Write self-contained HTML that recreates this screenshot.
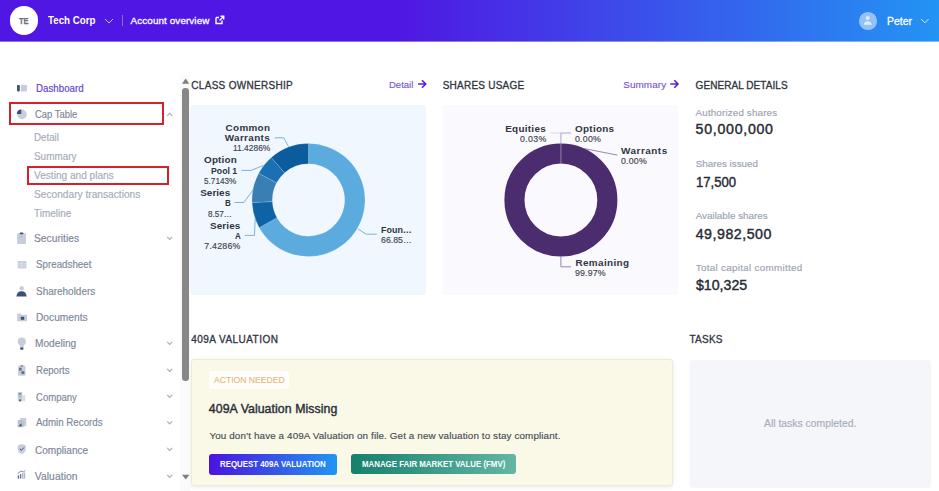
<!DOCTYPE html>
<html><head><meta charset="utf-8">
<style>
html,body{margin:0;padding:0;}
body{width:939px;height:491px;overflow:hidden;position:relative;background:#ffffff;font-family:"Liberation Sans",sans-serif;}
.t{position:absolute;white-space:nowrap;transform-origin:0 0;font-family:"Liberation Sans",sans-serif;}
.b{position:absolute;}
</style></head><body>
<div class="b" style="left:0;top:0;width:939px;height:41px;background:linear-gradient(90deg,#5016e3 0%,#5016e3 42%,#2394f3 100%);"></div>
<div class="b" style="left:0;top:41px;width:939px;height:1px;opacity:0.6;background:linear-gradient(90deg,#4a0ee0 0%,#4a0ee0 42%,#2394f3 100%);"></div>
<div class="b" style="left:9.5px;top:6.4px;width:28.4px;height:28.4px;border-radius:50%;background:#fff;"></div>
<div class="b" style="left:122px;top:15px;width:1px;height:11px;background:rgba(255,255,255,0.35);"></div>
<div class="b" style="left:859px;top:12px;width:17.5px;height:17.5px;border-radius:50%;background:rgba(255,255,255,0.5);"></div>

<!-- panels -->
<div class="b" style="left:190.2px;top:104.5px;width:236px;height:190.7px;background:#f0f7fe;border-radius:2px;"></div>
<div class="b" style="left:442.8px;top:104.5px;width:235.4px;height:190.7px;background:#faf9fe;border-radius:2px;"></div>
<div class="b" style="left:191px;top:359px;width:479.5px;height:125px;background:#faf9e7;border:1px solid #eeebd8;border-radius:3px;box-shadow:0 1px 4px rgba(0,0,0,0.09);"></div>
<div class="b" style="left:209px;top:371.3px;width:80px;height:18px;background:#fffefa;border-radius:3px;"></div>
<div class="b" style="left:209px;top:453.6px;width:127.7px;height:21.3px;background:linear-gradient(90deg,#4a13e0,#2196f3);border-radius:3px;"></div>
<div class="b" style="left:350.6px;top:453.7px;width:165px;height:20.6px;background:linear-gradient(90deg,#16806d,#63b6a6);border-radius:3px;"></div>
<div class="b" style="left:690px;top:359.5px;width:241px;height:127px;background:#f5f6fa;border-radius:3px;box-shadow:0 1px 2px rgba(0,0,0,0.04);"></div>

<!-- scrollbar -->
<div class="b" style="left:180px;top:75px;width:10px;height:416px;background:#fafafa;"></div>
<div class="b" style="left:182.3px;top:88.3px;width:6.6px;height:292.5px;background:#878787;border-radius:3.3px;"></div>

<!-- red boxes -->
<div class="b" style="left:8.6px;top:102.2px;width:151.4px;height:19.3px;border:2px solid #d2232c;"></div>
<div class="b" style="left:27px;top:165.7px;width:138.2px;height:15.8px;border:2px solid #d2232c;"></div>

<svg class="b" style="left:0;top:0" width="939" height="491" viewBox="0 0 939 491">
 <!-- header icons -->
 <polyline points="105,19 109,23 113,19" fill="none" stroke="rgba(255,255,255,0.7)" stroke-width="1"/>
 <path d="M216 17.5v6h6v-3 M216 17.5h3" fill="none" stroke="#fff" stroke-width="1.4"/>
 <path d="M219.5 20.5L223.5 16.5M220.5 16.3h3.2v3.2" fill="none" stroke="#fff" stroke-width="1.4"/>
 <circle cx="867.7" cy="18" r="2" fill="rgba(255,255,255,0.7)"/>
 <path d="M863.6 24.8c0.4-2.6 2-3.6 4.1-3.6s3.7 1 4.1 3.6z" fill="rgba(255,255,255,0.7)"/>
 <polyline points="921,19 924.8,22.8 928.6,19" fill="none" stroke="rgba(255,255,255,0.8)" stroke-width="1"/>
 <!-- scroll arrows -->
 <polygon points="182,83.8 189.3,83.8 185.65,78.5" fill="#7e7e7e"/>
 <polygon points="182,474.7 189.5,474.7 185.75,479.5" fill="#7e7e7e"/>
 <!-- sidebar icons -->
 <rect x="17" y="85" width="2.8" height="6.4" rx="0.8" fill="#3b4f7c"/>
 <rect x="20.8" y="85" width="6.2" height="6.4" rx="0.6" fill="#c7cedb"/>
 <circle cx="22" cy="114.4" r="4.8" fill="#c7cedb"/>
 <path d="M21.3 109.4A4.6 4.6 0 0 0 16.8 113.9L21.3 113.9Z" fill="#3b4f7c"/>
 <rect x="17.1" y="233.2" width="8.9" height="10.7" rx="1" fill="#c7cedb"/>
 <rect x="19.8" y="232.5" width="3.5" height="1.8" rx="0.6" fill="#3b4f7c"/>
 <rect x="19" y="236.5" width="3" height="0.8" fill="#aab2c2"/>
 <rect x="17.6" y="261" width="8.8" height="7.4" rx="0.8" fill="#c7cedb"/>
 <path d="M17.6 263.8h8.8M17.6 266h8.8M21.5 261v7.4" stroke="#e6e9ef" stroke-width="0.6"/>
 <circle cx="21.7" cy="288.3" r="2.2" fill="#c7cedb"/>
 <path d="M16.4 296.4c0.3-3.5 2.3-5.2 5.15-5.2s4.85 1.7 5.15 5.2z" fill="#3b4f7c"/>
 <path d="M17.2 313.5h3.5l1 1.2h5.3v6.6h-9.8z" fill="#c7cedb"/>
 <rect x="20.8" y="316.8" width="3.4" height="3" rx="0.5" fill="#3b4f7c"/>
 <circle cx="21.8" cy="341.6" r="4.1" fill="#c7cedb"/>
 <rect x="19.9" y="345" width="3.8" height="3.4" fill="#c7cedb"/>
 <rect x="20.2" y="347.6" width="3.2" height="2.2" rx="0.8" fill="#3b4f7c"/>
 <rect x="18.1" y="365.8" width="7.4" height="10" rx="0.8" fill="#c7cedb"/>
 <rect x="20.3" y="365.2" width="3" height="1.3" rx="0.4" fill="#6f7a96"/>
 <rect x="19" y="367.8" width="2.6" height="2.8" fill="#66718f"/>
 <circle cx="22.9" cy="372.6" r="1.7" fill="#66718f"/>
 <rect x="17.8" y="392" width="4.4" height="9.3" fill="#c7cedb"/>
 <rect x="22.2" y="395.2" width="3" height="6.1" fill="#d9dde6"/>
 <rect x="18.6" y="393.2" width="2.8" height="1.6" fill="#7d88a3"/>
 <rect x="18.6" y="396" width="2.8" height="1" fill="#a3acbd"/>
 <rect x="19.2" y="399.4" width="1.8" height="1.9" fill="#4a5a82"/>
 <rect x="20" y="418" width="6.3" height="8.3" rx="0.8" fill="#c7cedb"/>
 <rect x="17.7" y="420" width="6" height="7.2" rx="0.8" fill="#b9c1cf"/>
 <path d="M18.5 426.3l3-3v3z" fill="#3b4f7c"/>
 <path d="M21.75 444l4.05 1.5v3.5c0 2.6-1.8 4.2-4.05 5c-2.25-0.8-4.05-2.4-4.05-5v-3.5z" fill="#c7cedb"/>
 <polyline points="19.8,448.8 21.3,450.3 23.9,447.5" fill="none" stroke="#3b4f7c" stroke-width="1"/>
 <rect x="17.7" y="475.5" width="1.4" height="3.1" fill="#5d6b8c"/>
 <rect x="19.9" y="474" width="1.4" height="4.6" fill="#6f7c99"/>
 <rect x="22.1" y="473" width="1.4" height="5.6" fill="#a9b1c1"/>
 <rect x="24.1" y="472.5" width="1.1" height="6.1" fill="#a9b1c1"/>
 <path d="M17.7 473.5l3.5-2.5 2 1 2-1.5" fill="none" stroke="#5d6b8c" stroke-width="0.8"/>
 <!-- chevrons -->
 <polyline points="167.2,115.8 169.7,113.3 172.2,115.8" fill="none" stroke="#a9afbb" stroke-width="1.2"/>
 <polyline points="167.2,236.8 169.7,239.3 172.2,236.8" fill="none" stroke="#a9afbb" stroke-width="1.2"/>
 <polyline points="167.2,341.8 169.7,344.3 172.2,341.8" fill="none" stroke="#a9afbb" stroke-width="1.2"/>
 <polyline points="167.2,368.8 169.7,371.3 172.2,368.8" fill="none" stroke="#a9afbb" stroke-width="1.2"/>
 <polyline points="167.2,394.8 169.7,397.3 172.2,394.8" fill="none" stroke="#a9afbb" stroke-width="1.2"/>
 <polyline points="167.2,421.3 169.7,423.8 172.2,421.3" fill="none" stroke="#a9afbb" stroke-width="1.2"/>
 <polyline points="167.2,447.8 169.7,450.3 172.2,447.8" fill="none" stroke="#a9afbb" stroke-width="1.2"/>
 <polyline points="167.2,474.8 169.7,477.3 172.2,474.8" fill="none" stroke="#a9afbb" stroke-width="1.2"/>
 <!-- arrows for Detail / Summary -->
 <path d="M418 84h7.5M422 80.3l3.7 3.7-3.7 3.7" fill="none" stroke="#5a1fe0" stroke-width="1.6"/>
 <path d="M670.3 84h7.5M674.3 80.3l3.7 3.7-3.7 3.7" fill="none" stroke="#5a1fe0" stroke-width="1.6"/>
 <!-- donut 1 -->
 <path d="M308.50 143.50A56.5 56.5 0 1 1 259.24 227.66L276.94 217.72A36.2 36.2 0 1 0 308.50 163.80Z" fill="#5babdf" stroke="rgba(240,247,254,0.5)" stroke-width="0.3"/><path d="M259.24 227.66A56.5 56.5 0 0 1 252.06 202.54L272.34 201.62A36.2 36.2 0 0 0 276.94 217.72Z" fill="#0e63a4" stroke="rgba(240,247,254,0.5)" stroke-width="0.3"/><path d="M252.06 202.54A56.5 56.5 0 0 1 258.75 173.23L276.62 182.85A36.2 36.2 0 0 0 272.34 201.62Z" fill="#3a7fb3" stroke="rgba(240,247,254,0.5)" stroke-width="0.3"/><path d="M258.75 173.23A56.5 56.5 0 0 1 271.33 157.45L284.68 172.74A36.2 36.2 0 0 0 276.62 182.85Z" fill="#1a70b2" stroke="rgba(240,247,254,0.5)" stroke-width="0.3"/><path d="M271.33 157.45A56.5 56.5 0 0 1 308.50 143.50L308.50 163.80A36.2 36.2 0 0 0 284.68 172.74Z" fill="#0b5c9c" stroke="rgba(240,247,254,0.5)" stroke-width="0.3"/>
 <polyline points="274.8,137.8 283.8,137.8 288.6,146.8" fill="none" stroke="#5ca2cf" stroke-width="0.8"/>
 <polyline points="241.4,170.4 251.2,170.4 263.4,165.5" fill="none" stroke="#5ca2cf" stroke-width="0.8"/>
 <polyline points="234.6,202.5 243.9,202.5 253.6,189" fill="none" stroke="#5ca2cf" stroke-width="0.8"/>
 <polyline points="244.7,235.4 254.4,235.4 255.3,217.5" fill="none" stroke="#5ca2cf" stroke-width="0.8"/>
 <polyline points="358.1,229.1 366.3,234.2 376.7,234.2" fill="none" stroke="#5ca2cf" stroke-width="0.8"/>
 <!-- donut 2 -->
 <circle cx="560.9" cy="200" r="46.45" fill="none" stroke="#4b2c6f" stroke-width="20.1"/>
 <polyline points="550.7,133 560.9,133" fill="none" stroke="#d6cfe4" stroke-width="0.8"/>
 <polyline points="571.1,133 560.9,133 560.9,163.3" fill="none" stroke="#a092bd" stroke-width="0.8"/>
 <polyline points="583.8,148.5 617.4,155.1" fill="none" stroke="#7c6a9e" stroke-width="0.8"/>
 <polyline points="560.9,256.3 560.9,266.8 571,266.8" fill="none" stroke="#7c6a9e" stroke-width="0.8"/>
</svg>
<div class="t" style="left:19.30px;top:15.60px;font-size:9.42px;line-height:9.42px;font-weight:700;-webkit-text-stroke:0.25px currentColor;color:#6b7280;transform:scaleX(0.800);letter-spacing:0.000px;">TE</div>
<div class="t" style="left:48.00px;top:15.30px;font-size:11.16px;line-height:11.16px;font-weight:700;color:#ffffff;transform:scaleX(0.873);letter-spacing:0.000px;">Tech Corp</div>
<div class="t" style="left:130.60px;top:15.90px;font-size:9.90px;line-height:9.90px;font-weight:400;-webkit-text-stroke:0.3px currentColor;color:#ffffff;transform:scaleX(1.000);letter-spacing:0.093px;">Account overview</div>
<div class="t" style="left:886.50px;top:15.90px;font-size:11.01px;line-height:11.01px;font-weight:400;-webkit-text-stroke:0.3px currentColor;color:#ffffff;transform:scaleX(0.948);letter-spacing:0.000px;">Peter</div>
<div class="t" style="left:35.50px;top:83.90px;font-size:10.30px;line-height:10.30px;font-weight:400;-webkit-text-stroke:0.15px currentColor;color:#5e40cc;transform:scaleX(0.945);letter-spacing:0.000px;">Dashboard</div>
<div class="t" style="left:35.20px;top:109.70px;font-size:10.30px;line-height:10.30px;font-weight:400;-webkit-text-stroke:0.15px currentColor;color:#7d869a;transform:scaleX(0.915);letter-spacing:0.000px;">Cap Table</div>
<div class="t" style="left:34.30px;top:132.90px;font-size:10.30px;line-height:10.30px;font-weight:400;-webkit-text-stroke:0.15px currentColor;color:#a4abba;transform:scaleX(0.944);letter-spacing:0.000px;">Detail</div>
<div class="t" style="left:34.30px;top:151.60px;font-size:10.30px;line-height:10.30px;font-weight:400;-webkit-text-stroke:0.15px currentColor;color:#a4abba;transform:scaleX(0.964);letter-spacing:0.000px;">Summary</div>
<div class="t" style="left:34.30px;top:171.00px;font-size:10.30px;line-height:10.30px;font-weight:400;-webkit-text-stroke:0.15px currentColor;color:#a4abba;transform:scaleX(0.980);letter-spacing:0.000px;">Vesting and plans</div>
<div class="t" style="left:33.80px;top:190.30px;font-size:10.30px;line-height:10.30px;font-weight:400;-webkit-text-stroke:0.15px currentColor;color:#a4abba;transform:scaleX(0.988);letter-spacing:0.000px;">Secondary transactions</div>
<div class="t" style="left:34.30px;top:208.60px;font-size:10.30px;line-height:10.30px;font-weight:400;-webkit-text-stroke:0.15px currentColor;color:#a4abba;transform:scaleX(0.967);letter-spacing:0.000px;">Timeline</div>
<div class="t" style="left:34.00px;top:233.70px;font-size:10.30px;line-height:10.30px;font-weight:400;-webkit-text-stroke:0.15px currentColor;color:#7d869a;transform:scaleX(0.996);letter-spacing:0.000px;">Securities</div>
<div class="t" style="left:35.50px;top:260.20px;font-size:10.30px;line-height:10.30px;font-weight:400;-webkit-text-stroke:0.15px currentColor;color:#7d869a;transform:scaleX(0.949);letter-spacing:0.000px;">Spreadsheet</div>
<div class="t" style="left:35.50px;top:286.70px;font-size:10.30px;line-height:10.30px;font-weight:400;-webkit-text-stroke:0.15px currentColor;color:#7d869a;transform:scaleX(0.967);letter-spacing:0.000px;">Shareholders</div>
<div class="t" style="left:35.50px;top:312.70px;font-size:10.30px;line-height:10.30px;font-weight:400;-webkit-text-stroke:0.15px currentColor;color:#7d869a;transform:scaleX(0.990);letter-spacing:0.000px;">Documents</div>
<div class="t" style="left:34.80px;top:338.70px;font-size:10.30px;line-height:10.30px;font-weight:400;-webkit-text-stroke:0.15px currentColor;color:#7d869a;transform:scaleX(0.986);letter-spacing:0.000px;">Modeling</div>
<div class="t" style="left:35.50px;top:366.20px;font-size:10.30px;line-height:10.30px;font-weight:400;-webkit-text-stroke:0.15px currentColor;color:#7d869a;transform:scaleX(0.931);letter-spacing:0.000px;">Reports</div>
<div class="t" style="left:35.50px;top:392.70px;font-size:10.30px;line-height:10.30px;font-weight:400;-webkit-text-stroke:0.15px currentColor;color:#7d869a;transform:scaleX(0.927);letter-spacing:0.000px;">Company</div>
<div class="t" style="left:35.50px;top:418.30px;font-size:10.30px;line-height:10.30px;font-weight:400;-webkit-text-stroke:0.15px currentColor;color:#7d869a;transform:scaleX(0.946);letter-spacing:0.000px;">Admin Records</div>
<div class="t" style="left:34.70px;top:445.60px;font-size:10.30px;line-height:10.30px;font-weight:400;-webkit-text-stroke:0.15px currentColor;color:#7d869a;transform:scaleX(0.978);letter-spacing:0.000px;">Compliance</div>
<div class="t" style="left:34.70px;top:472.00px;font-size:10.30px;line-height:10.30px;font-weight:400;-webkit-text-stroke:0.15px currentColor;color:#7d869a;transform:scaleX(1.000);letter-spacing:0.088px;">Valuation</div>
<div class="t" style="left:191.30px;top:80.80px;font-size:10.00px;line-height:10.00px;font-weight:400;-webkit-text-stroke:0.3px currentColor;color:#30343e;transform:scaleX(1.000);letter-spacing:0.293px;">CLASS OWNERSHIP</div>
<div class="t" style="left:389.20px;top:79.80px;font-size:9.90px;line-height:9.90px;font-weight:400;-webkit-text-stroke:0.15px currentColor;color:#7a55d8;transform:scaleX(0.962);letter-spacing:0.000px;">Detail</div>
<div class="t" style="left:442.70px;top:81.00px;font-size:10.00px;line-height:10.00px;font-weight:400;-webkit-text-stroke:0.3px currentColor;color:#30343e;transform:scaleX(1.000);letter-spacing:0.227px;">SHARES USAGE</div>
<div class="t" style="left:623.20px;top:79.80px;font-size:9.90px;line-height:9.90px;font-weight:400;-webkit-text-stroke:0.15px currentColor;color:#7a55d8;transform:scaleX(1.000);letter-spacing:0.117px;">Summary</div>
<div class="t" style="left:695.60px;top:81.20px;font-size:10.00px;line-height:10.00px;font-weight:400;-webkit-text-stroke:0.3px currentColor;color:#30343e;transform:scaleX(1.000);letter-spacing:0.064px;">GENERAL DETAILS</div>
<div class="t" style="left:695.60px;top:107.70px;font-size:9.80px;line-height:9.80px;font-weight:400;-webkit-text-stroke:0.15px currentColor;color:#9aa1b2;transform:scaleX(1.000);letter-spacing:0.156px;">Authorized shares</div>
<div class="t" style="left:695.60px;top:122.40px;font-size:14.20px;line-height:14.20px;font-weight:400;-webkit-text-stroke:0.4px currentColor;color:#262a33;transform:scaleX(1.000);letter-spacing:0.711px;">50,000,000</div>
<div class="t" style="left:695.70px;top:159.40px;font-size:9.80px;line-height:9.80px;font-weight:400;-webkit-text-stroke:0.15px currentColor;color:#9aa1b2;transform:scaleX(1.000);letter-spacing:0.017px;">Shares issued</div>
<div class="t" style="left:695.70px;top:174.60px;font-size:14.20px;line-height:14.20px;font-weight:400;-webkit-text-stroke:0.4px currentColor;color:#262a33;transform:scaleX(0.923);letter-spacing:0.000px;">17,500</div>
<div class="t" style="left:695.70px;top:211.30px;font-size:9.80px;line-height:9.80px;font-weight:400;-webkit-text-stroke:0.15px currentColor;color:#9aa1b2;transform:scaleX(1.000);letter-spacing:0.020px;">Available shares</div>
<div class="t" style="left:695.70px;top:226.50px;font-size:14.20px;line-height:14.20px;font-weight:400;-webkit-text-stroke:0.4px currentColor;color:#262a33;transform:scaleX(1.000);letter-spacing:0.522px;">49,982,500</div>
<div class="t" style="left:695.70px;top:262.60px;font-size:9.80px;line-height:9.80px;font-weight:400;-webkit-text-stroke:0.15px currentColor;color:#9aa1b2;transform:scaleX(1.000);letter-spacing:0.314px;">Total capital committed</div>
<div class="t" style="left:695.70px;top:278.20px;font-size:14.20px;line-height:14.20px;font-weight:400;-webkit-text-stroke:0.4px currentColor;color:#262a33;transform:scaleX(0.998);letter-spacing:0.000px;">$10,325</div>
<div class="t" style="left:191.20px;top:335.00px;font-size:10.00px;line-height:10.00px;font-weight:400;-webkit-text-stroke:0.3px currentColor;color:#30343e;transform:scaleX(1.000);letter-spacing:0.454px;">409A VALUATION</div>
<div class="t" style="left:213.60px;top:375.30px;font-size:9.42px;line-height:9.42px;font-weight:400;-webkit-text-stroke:0.15px currentColor;color:#e4ba80;transform:scaleX(0.913);letter-spacing:0.000px;">ACTION NEEDED</div>
<div class="t" style="left:208.80px;top:402.60px;font-size:12.32px;line-height:12.32px;font-weight:400;-webkit-text-stroke:0.4px currentColor;color:#2a2e38;transform:scaleX(1.000);letter-spacing:0.067px;">409A Valuation Missing</div>
<div class="t" style="left:209.40px;top:431.10px;font-size:9.86px;line-height:9.86px;font-weight:400;-webkit-text-stroke:0.15px currentColor;color:#474c57;transform:scaleX(1.000);letter-spacing:0.115px;">You don’t have a 409A Valuation on file. Get a new valuation to stay compliant.</div>
<div class="t" style="left:220.10px;top:459.90px;font-size:8.70px;line-height:8.70px;font-weight:700;color:#ffffff;transform:scaleX(0.906);letter-spacing:0.000px;">REQUEST 409A VALUATION</div>
<div class="t" style="left:361.90px;top:460.00px;font-size:8.70px;line-height:8.70px;font-weight:700;color:#ffffff;transform:scaleX(0.906);letter-spacing:0.000px;">MANAGE FAIR MARKET VALUE (FMV)</div>
<div class="t" style="left:689.50px;top:335.20px;font-size:10.00px;line-height:10.00px;font-weight:400;-webkit-text-stroke:0.3px currentColor;color:#30343e;transform:scaleX(1.000);letter-spacing:0.225px;">TASKS</div>
<div class="t" style="left:764.40px;top:417.50px;font-size:11.45px;line-height:11.45px;font-weight:400;-webkit-text-stroke:0.15px currentColor;color:#a6acba;transform:scaleX(0.908);letter-spacing:0.000px;">All tasks completed.</div>
<div class="t" style="left:225.60px;top:123.00px;font-size:9.90px;line-height:9.90px;font-weight:700;color:#2f3442;transform:scaleX(1.000);letter-spacing:0.320px;">Common</div>
<div class="t" style="left:224.80px;top:133.40px;font-size:9.90px;line-height:9.90px;font-weight:700;color:#2f3442;transform:scaleX(1.000);letter-spacing:0.343px;">Warrants</div>
<div class="t" style="left:232.80px;top:144.20px;font-size:8.80px;line-height:8.80px;font-weight:400;-webkit-text-stroke:0.15px currentColor;color:#3f4450;transform:scaleX(0.959);letter-spacing:0.000px;">11.4286%</div>
<div class="t" style="left:204.00px;top:155.00px;font-size:9.90px;line-height:9.90px;font-weight:700;color:#2f3442;transform:scaleX(1.000);letter-spacing:0.200px;">Option</div>
<div class="t" style="left:210.50px;top:165.60px;font-size:9.90px;line-height:9.90px;font-weight:700;color:#2f3442;transform:scaleX(0.883);letter-spacing:0.000px;">Pool 1</div>
<div class="t" style="left:204.40px;top:176.70px;font-size:8.80px;line-height:8.80px;font-weight:400;-webkit-text-stroke:0.15px currentColor;color:#3f4450;transform:scaleX(0.931);letter-spacing:0.000px;">5.7143%</div>
<div class="t" style="left:200.20px;top:187.80px;font-size:9.90px;line-height:9.90px;font-weight:700;color:#2f3442;transform:scaleX(1.000);letter-spacing:0.060px;">Series</div>
<div class="t" style="left:224.80px;top:198.00px;font-size:9.90px;line-height:9.90px;font-weight:700;color:#2f3442;transform:scaleX(0.814);letter-spacing:0.000px;">B</div>
<div class="t" style="left:207.70px;top:209.60px;font-size:8.80px;line-height:8.80px;font-weight:400;-webkit-text-stroke:0.15px currentColor;color:#3f4450;transform:scaleX(0.924);letter-spacing:0.000px;">8.57…</div>
<div class="t" style="left:210.00px;top:220.50px;font-size:9.90px;line-height:9.90px;font-weight:700;color:#2f3442;transform:scaleX(1.000);letter-spacing:0.120px;">Series</div>
<div class="t" style="left:234.90px;top:230.60px;font-size:9.90px;line-height:9.90px;font-weight:700;color:#2f3442;transform:scaleX(0.814);letter-spacing:0.000px;">A</div>
<div class="t" style="left:204.30px;top:242.20px;font-size:8.80px;line-height:8.80px;font-weight:400;-webkit-text-stroke:0.15px currentColor;color:#3f4450;transform:scaleX(1.000);letter-spacing:0.217px;">7.4286%</div>
<div class="t" style="left:381.30px;top:224.80px;font-size:9.90px;line-height:9.90px;font-weight:700;color:#2f3442;transform:scaleX(0.906);letter-spacing:0.000px;">Foun…</div>
<div class="t" style="left:381.00px;top:235.80px;font-size:8.80px;line-height:8.80px;font-weight:400;-webkit-text-stroke:0.15px currentColor;color:#3f4450;transform:scaleX(0.997);letter-spacing:0.000px;">66.85…</div>
<div class="t" style="left:505.20px;top:124.20px;font-size:9.90px;line-height:9.90px;font-weight:700;color:#2f3442;transform:scaleX(1.000);letter-spacing:0.300px;">Equities</div>
<div class="t" style="left:520.00px;top:135.30px;font-size:8.80px;line-height:8.80px;font-weight:400;-webkit-text-stroke:0.15px currentColor;color:#3f4450;transform:scaleX(1.000);letter-spacing:0.325px;">0.03%</div>
<div class="t" style="left:575.00px;top:124.20px;font-size:9.90px;line-height:9.90px;font-weight:700;color:#2f3442;transform:scaleX(1.000);letter-spacing:0.300px;">Options</div>
<div class="t" style="left:575.00px;top:135.30px;font-size:8.80px;line-height:8.80px;font-weight:400;-webkit-text-stroke:0.15px currentColor;color:#3f4450;transform:scaleX(1.000);letter-spacing:0.225px;">0.00%</div>
<div class="t" style="left:621.10px;top:146.00px;font-size:9.90px;line-height:9.90px;font-weight:700;color:#2f3442;transform:scaleX(1.000);letter-spacing:0.514px;">Warrants</div>
<div class="t" style="left:621.00px;top:157.20px;font-size:8.80px;line-height:8.80px;font-weight:400;-webkit-text-stroke:0.15px currentColor;color:#3f4450;transform:scaleX(1.000);letter-spacing:0.200px;">0.00%</div>
<div class="t" style="left:575.40px;top:257.80px;font-size:9.90px;line-height:9.90px;font-weight:700;color:#2f3442;transform:scaleX(1.000);letter-spacing:0.400px;">Remaining</div>
<div class="t" style="left:575.00px;top:268.90px;font-size:8.80px;line-height:8.80px;font-weight:400;-webkit-text-stroke:0.15px currentColor;color:#3f4450;transform:scaleX(1.000);letter-spacing:0.140px;">99.97%</div>
</body></html>
